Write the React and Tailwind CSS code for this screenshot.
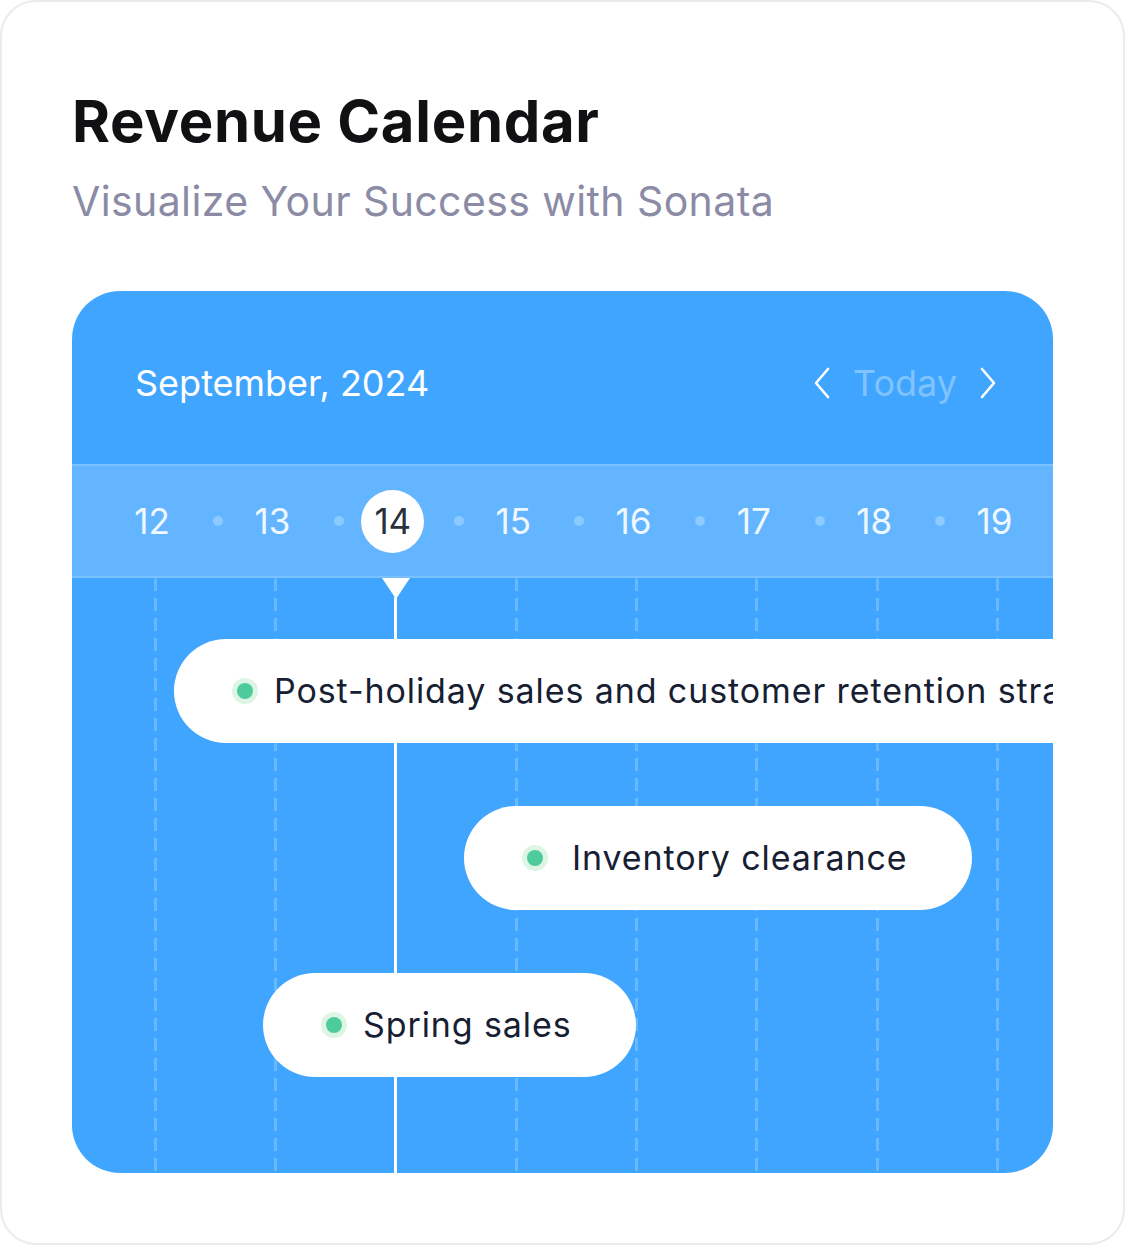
import React from "react";

const days = [12, 13, 14, 15, 16, 17, 18, 19];

function Chip({ label, ml, textPad = "" }) {
  return (
    <div
      className={`self-start h-[104px] rounded-full bg-white flex items-center pl-[58px] pr-[64px] gap-[16px] whitespace-nowrap shrink-0 ${ml}`}
    >
      <div className="w-[26px] h-[26px] rounded-full bg-[#dcf6e3] flex items-center justify-center shrink-0">
        <div className="w-[16px] h-[16px] rounded-full bg-[#4dcb9d]" />
      </div>
      <span className={`text-[34px] leading-none text-[#172033] tracking-[0.9px] ${textPad}`}>{label}</span>
    </div>
  );
}

export default function App() {
  return (
    <div className="bg-white w-[1125px] h-[1245px]">
      <div className="w-[1125px] h-[1245px] bg-white border-2 border-[#ebebeb] rounded-[36px] px-[70px] pt-[90px] font-['Inter',sans-serif] flex flex-col">
        <h1 className="text-[58px] leading-none font-bold text-[#111114] tracking-[0.7px]">
          Revenue Calendar
        </h1>
        <p className="mt-[31px] text-[41px] leading-none text-[#8b8ba6] tracking-[0.4px]">
          Visualize Your Success with Sonata
        </p>

        <div className="mt-[69px] w-[981px] h-[882px] rounded-[48px] bg-[#3fa5ff] overflow-hidden flex flex-col">
          <div className="h-[173px] shrink-0 flex items-center justify-between pl-[63px] pr-[56px] pt-[11px]">
            <span className="text-[36px] leading-none text-white">September, 2024</span>
            <div className="flex items-center gap-[22px]">
              <svg width="18" height="32" viewBox="0 0 18 32" fill="none">
                <polyline points="15,2 3,16 15,30" stroke="white" strokeWidth="2.6" strokeLinecap="round" strokeLinejoin="round" />
              </svg>
              <span className="text-[36px] leading-none text-white/35">Today</span>
              <svg width="18" height="32" viewBox="0 0 18 32" fill="none">
                <polyline points="3,2 15,16 3,30" stroke="white" strokeWidth="2.6" strokeLinecap="round" strokeLinejoin="round" />
              </svg>
            </div>
          </div>

          <div className="h-[114px] shrink-0 border-y-2 border-[#7ac1ff] bg-[#63b5ff] pl-[20px] grid grid-cols-[repeat(8,120.33px)] items-center">
            {days.map((d, i) => (
              <div key={d} className="relative flex items-center justify-center h-full">
                {d === 14 ? (
                  <div className="w-[63px] h-[63px] rounded-full bg-white flex items-center justify-center text-[35px] leading-none text-[#2b313b]">
                    {d}
                  </div>
                ) : (
                  <span className="text-[35px] leading-none text-white/90">{d}</span>
                )}
                {i < days.length - 1 && (
                  <div className="absolute left-[calc(100%+1px)] top-1/2 -translate-y-1/2 w-[10px] h-[10px] rounded-full bg-[#8ccaff]" />
                )}
              </div>
            ))}
          </div>

          <div className="relative flex-1 flex flex-col pt-[61px]">
            <div className="absolute inset-0 pl-[20px] grid grid-cols-[repeat(8,120.33px)]">
              {days.map((d) =>
                d === 14 ? (
                  <div key={d} className="relative h-full flex flex-col items-center translate-x-[3px]">
                    <svg width="28" height="21" viewBox="0 0 28 21" className="shrink-0">
                      <polygon points="0,0 28,0 14,21" fill="white" />
                    </svg>
                    <div className="w-[3px] flex-1 bg-white -mt-[2px]" />
                  </div>
                ) : (
                  <div key={d} className="h-full flex justify-center translate-x-[3px]">
                    <div className="w-[3px] h-full bg-[repeating-linear-gradient(to_bottom,rgba(255,255,255,0.22)_0px,rgba(255,255,255,0.22)_13px,transparent_13px,transparent_20px)] rounded-full" />
                  </div>
                )
              )}
            </div>
            <div className="relative flex flex-col gap-[63px]">
              <Chip label="Post-holiday sales and customer retention strategies" ml="ml-[102px]" />
              <Chip label="Inventory clearance" ml="ml-[392px]" textPad="pl-[8px]" />
              <Chip label="Spring sales" ml="ml-[191px]" />
            </div>
          </div>
        </div>
      </div>
    </div>
  );
}
